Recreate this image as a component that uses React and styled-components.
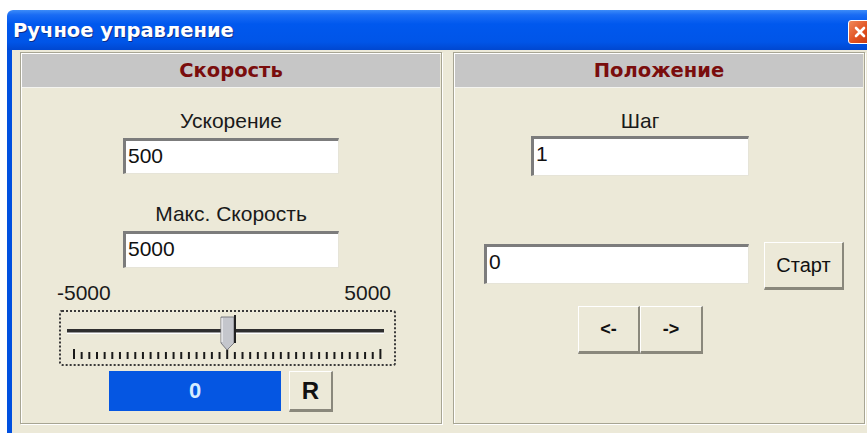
import React from "react";
import styled, { createGlobalStyle } from "styled-components";

const GlobalStyle = createGlobalStyle`
  html, body {
    margin: 0;
    padding: 0;
    background: #ffffff;
    overflow: hidden;
  }
`;

const Window = styled.div`
  margin: 10px 0 0 7px;
  height: 423px;
  display: flex;
  flex-direction: column;
  font-family: "Liberation Sans", Arial, sans-serif;
`;

const TitleBar = styled.div`
  height: 40px;
  flex-shrink: 0;
  display: flex;
  align-items: center;
  justify-content: space-between;
  padding-left: 6px;
  border-radius: 6px 0 0 0;
  background: linear-gradient(
    to bottom,
    #3d8cf8 0%,
    #1a6cf4 12%,
    #0058ee 35%,
    #0055e8 80%,
    #0047d0 100%
  );
  color: #ffffff;
  font-family: "DejaVu Sans", Verdana, sans-serif;
  font-weight: bold;
  font-size: 19.5px;
  text-shadow: 1px 1px 0 #0a2e8a;
`;

const CloseButton = styled.div`
  width: 22px;
  height: 22px;
  margin-top: 4px;
  margin-right: -5px;
  border: 1px solid #ffffff;
  border-radius: 3px;
  background: linear-gradient(135deg, #f08a5c 0%, #e0501f 55%, #c43a12 100%);
  display: flex;
  align-items: center;
  justify-content: center;
`;

const Body = styled.div`
  flex: 1;
  display: flex;
  gap: 11px;
  padding: 2px 2px 9px 8px;
  background: #ece9d8;
  border-left: 5px solid #0050e0;
`;

const Panel = styled.div`
  width: ${(p) => (p.$width ? `${p.$width}px` : "auto")};
  flex: ${(p) => (p.$width ? "none" : "1")};
  display: flex;
  flex-direction: column;
  border: 1px solid #a7a593;
  box-shadow: inset 1px 1px 0 #ffffff, 1px 1px 0 #ffffff;
`;

const PanelHeader = styled.div`
  height: 33px;
  margin: 1px 1px 0 1px;
  background: #c6c6c6;
  border-bottom: 1px solid #f4f4f0;
  display: flex;
  align-items: center;
  justify-content: center;
  color: #7a0d0d;
  font-family: "DejaVu Sans", Verdana, sans-serif;
  font-weight: bold;
  font-size: 19.5px;
`;

const Column = styled.div`
  display: flex;
  flex-direction: column;
  align-items: ${(p) => p.$align || "center"};
  padding-left: ${(p) => p.$indent || 0}px;
`;

const Label = styled.div`
  font-size: 21px;
  line-height: 20px;
  color: #1a1a1a;
  margin-top: ${(p) => p.$top}px;
  margin-left: ${(p) => p.$left || 0}px;
  width: ${(p) => (p.$width ? `${p.$width}px` : "auto")};
  text-align: center;
`;

const Field = styled.div`
  box-sizing: border-box;
  width: ${(p) => p.$width}px;
  height: ${(p) => p.$height}px;
  margin-top: ${(p) => p.$top || 0}px;
  margin-left: ${(p) => p.$left || 0}px;
  background: #ffffff;
  border-top: 3px solid #7c7c7c;
  border-left: 3px solid #7c7c7c;
  border-right: 1px solid #e6e4d8;
  border-bottom: 1px solid #e6e4d8;
  padding: 3px 0 0 2px;
  font-size: 21px;
  line-height: 24px;
  color: #111111;
`;

const Button = styled.div`
  box-sizing: border-box;
  width: ${(p) => p.$width}px;
  height: ${(p) => p.$height}px;
  margin-top: ${(p) => p.$shift || 0}px;
  background: #ece9d8;
  border-top: 1px solid #ffffff;
  border-left: 1px solid #ffffff;
  border-right: 2px solid #8a887c;
  border-bottom: 3px solid #8a887c;
  display: flex;
  align-items: center;
  justify-content: center;
  font-size: ${(p) => p.$size || 20}px;
  font-weight: ${(p) => (p.$bold ? "bold" : "normal")};
  color: #111111;
`;

const ScaleLabels = styled.div`
  width: 334px;
  margin-top: 15px;
  margin-right: 14px;
  display: flex;
  justify-content: space-between;
  font-size: 21px;
  line-height: 20px;
  color: #1a1a1a;
`;

const SliderFrame = styled.div`
  box-sizing: border-box;
  width: 337px;
  height: 56px;
  margin-top: 7px;
  margin-right: 7px;
  border: 2px dotted #3a3a3a;
  border-radius: 3px;
`;

const Readout = styled.div`
  display: flex;
  gap: 8px;
  margin-top: 5px;
  margin-right: 20px;
`;

const ValueBox = styled.div`
  width: 172px;
  height: 40px;
  background: #0556e2;
  display: flex;
  align-items: center;
  justify-content: center;
  color: #d6ecff;
  font-weight: bold;
  font-size: 22px;
`;

const Row = styled.div`
  display: flex;
  align-items: flex-start;
  gap: 15px;
  margin-top: ${(p) => p.$top}px;
`;

const ButtonPair = styled.div`
  display: flex;
  margin-top: ${(p) => p.$top}px;
  margin-left: ${(p) => p.$left}px;
`;

function Slider() {
  const ticks = [];
  for (let i = 0; i <= 40; i++) {
    const x = 13 + i * 7.66;
    const end = i === 0 || i === 40 || i === 20;
    ticks.push(
      <line
        key={i}
        x1={x}
        x2={x}
        y1={end ? 37 : 40}
        y2={47}
        stroke="#1a1a1a"
        strokeWidth="2"
      />
    );
  }
  return (
    <SliderFrame>
      <svg width="333" height="52" viewBox="0 0 333 52">
        <rect x="6" y="17" width="317" height="3" fill="#2e2e2e" />
        <rect x="6" y="20" width="317" height="1" fill="#9a9a9a" />
        <rect x="6" y="21" width="317" height="1" fill="#ffffff" />
        {ticks}
        <path
          d="M160 5 L173 5 L173 31 L166 38 L160 31 Z"
          fill="#c4c6cc"
          stroke="#7a7a80"
          strokeWidth="1"
        />
        <line x1="161" y1="6" x2="161" y2="30" stroke="#ffffff" strokeWidth="1" />
        <line x1="174" y1="3" x2="174" y2="31" stroke="#222" strokeWidth="2" />
      </svg>
    </SliderFrame>
  );
}

export default function App() {
  return (
    <>
      <GlobalStyle />
      <Window>
        <TitleBar>
          <span>Ручное управление</span>
          <CloseButton>
            <svg width="14" height="14" viewBox="0 0 14 14">
              <path
                d="M3 3 L11 11 M11 3 L3 11"
                stroke="#ffffff"
                strokeWidth="2.6"
                strokeLinecap="round"
              />
            </svg>
          </CloseButton>
        </TitleBar>
        <Body>
          <Panel $width={420}>
            <PanelHeader>Скорость</PanelHeader>
            <Column>
              <Label $top={23}>Ускорение</Label>
              <Field $width={216} $height={36} $top={7}>
                500
              </Field>
              <Label $top={30}>Макс. Скорость</Label>
              <Field $width={216} $height={37} $top={7}>
                5000
              </Field>
              <ScaleLabels>
                <span>-5000</span>
                <span>5000</span>
              </ScaleLabels>
              <Slider />
              <Readout>
                <ValueBox>0</ValueBox>
                <Button $width={44} $height={41} $size={24} $bold>
                  R
                </Button>
              </Readout>
            </Column>
          </Panel>
          <Panel>
            <PanelHeader>Положение</PanelHeader>
            <Column $align="flex-start" $indent={30}>
              <Label $top={23} $width={218} $left={47}>
                Шаг
              </Label>
              <Field $width={218} $height={40} $top={5} $left={47}>
                1
              </Field>
              <Row $top={68}>
                <Field $width={265} $height={40}>
                  0
                </Field>
                <Button $width={80} $height={48} $shift={-2}>
                  Старт
                </Button>
              </Row>
              <ButtonPair $top={16} $left={94}>
                <Button $width={62} $height={48} $size={18} $bold>
                  &lt;-
                </Button>
                <Button $width={63} $height={48} $size={18} $bold>
                  -&gt;
                </Button>
              </ButtonPair>
            </Column>
          </Panel>
        </Body>
      </Window>
    </>
  );
}
